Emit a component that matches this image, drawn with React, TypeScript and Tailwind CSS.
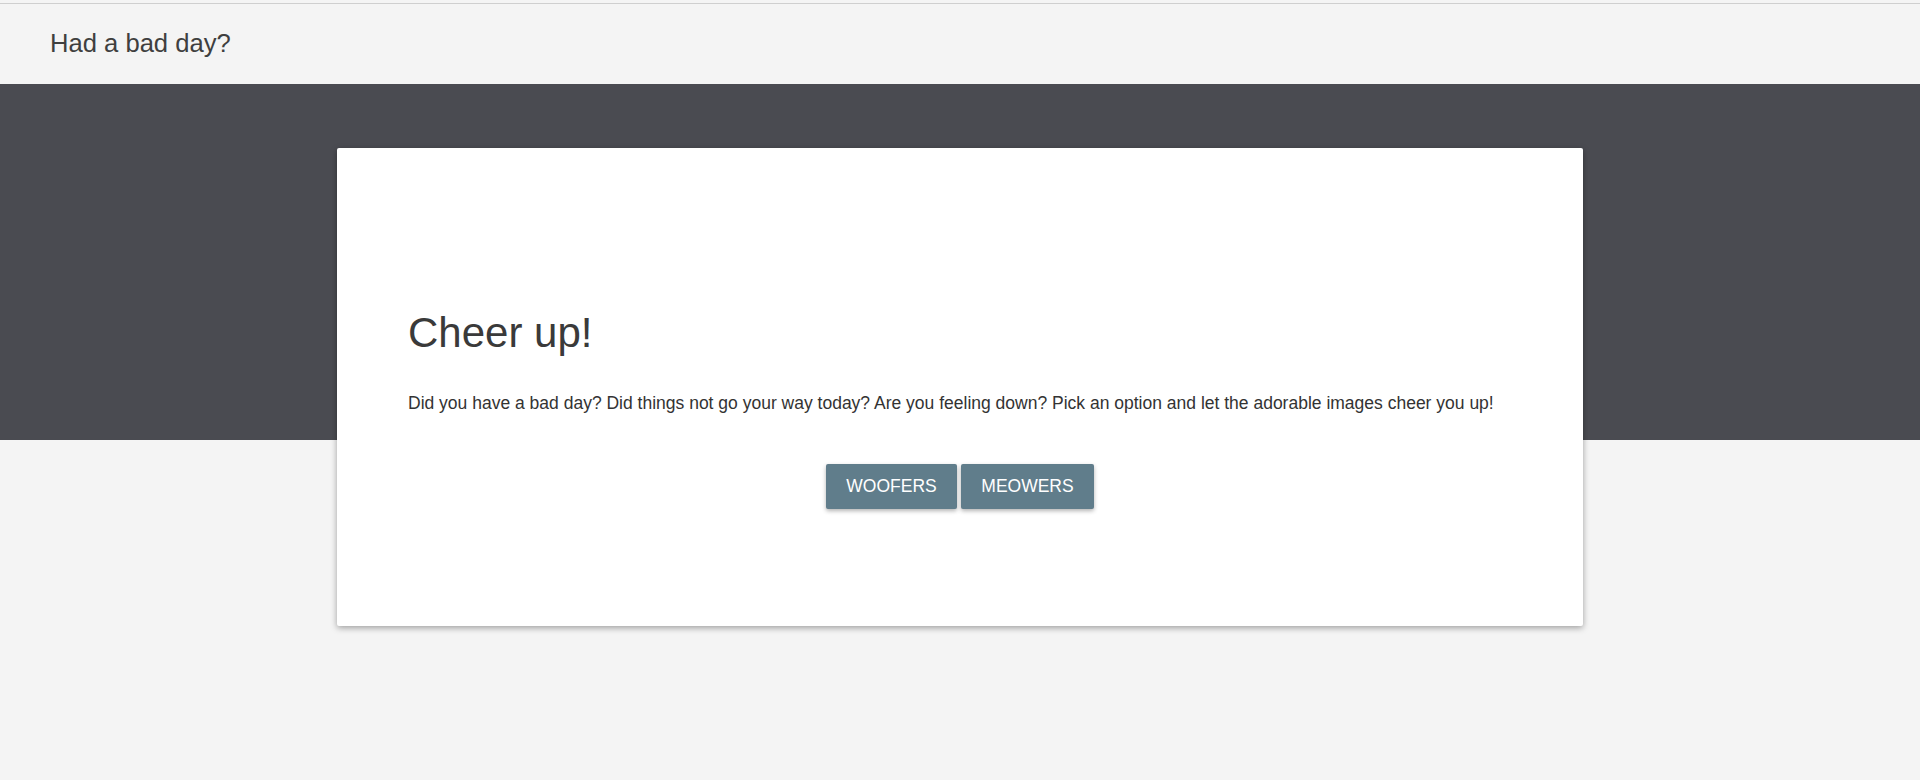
import React from "react";

export default function App() {
  return (
    <div
      className="min-h-[780px] w-full bg-[#f4f4f4] text-[#444]"
      style={{ fontFamily: '"Liberation Sans", Arial, sans-serif' }}
    >
      <div className="pt-[3px]">
        <header className="h-[81px] border-t border-[#cfcfcf] flex items-center pl-[50px]">
          <h1 className="text-[25.6px] text-[#3f3f3f] font-normal pb-[1px]">Had a bad day?</h1>
        </header>
      </div>
      <main className="bg-[linear-gradient(to_bottom,#4a4b51_356px,transparent_356px)] pt-[64px] pb-[154px]">
        <div className="mx-auto w-[1246px] h-[478px] bg-white rounded-[2px] shadow-[0_2px_6px_rgba(0,0,0,0.35)] px-[71px] pt-[160px]">
          <h2 className="text-[42px] leading-[50px] text-[#3a3a3a] font-normal">Cheer up!</h2>
          <p className="mt-[33px] text-[17.5px] leading-[24px] text-[#333]">
            Did you have a bad day? Did things not go your way today? Are you feeling down? Pick an option and let the adorable images cheer you up!
          </p>
          <div className="mt-[49px] flex justify-center gap-[4px]">
            <button className="h-[45px] w-[131px] bg-[#607d8b] text-white text-[17.5px] rounded-[2px] shadow-[0_2px_4px_rgba(0,0,0,0.3)]">WOOFERS</button>
            <button className="h-[45px] w-[133px] bg-[#607d8b] text-white text-[17.5px] rounded-[2px] shadow-[0_2px_4px_rgba(0,0,0,0.3)]">MEOWERS</button>
          </div>
        </div>
      </main>
    </div>
  );
}
